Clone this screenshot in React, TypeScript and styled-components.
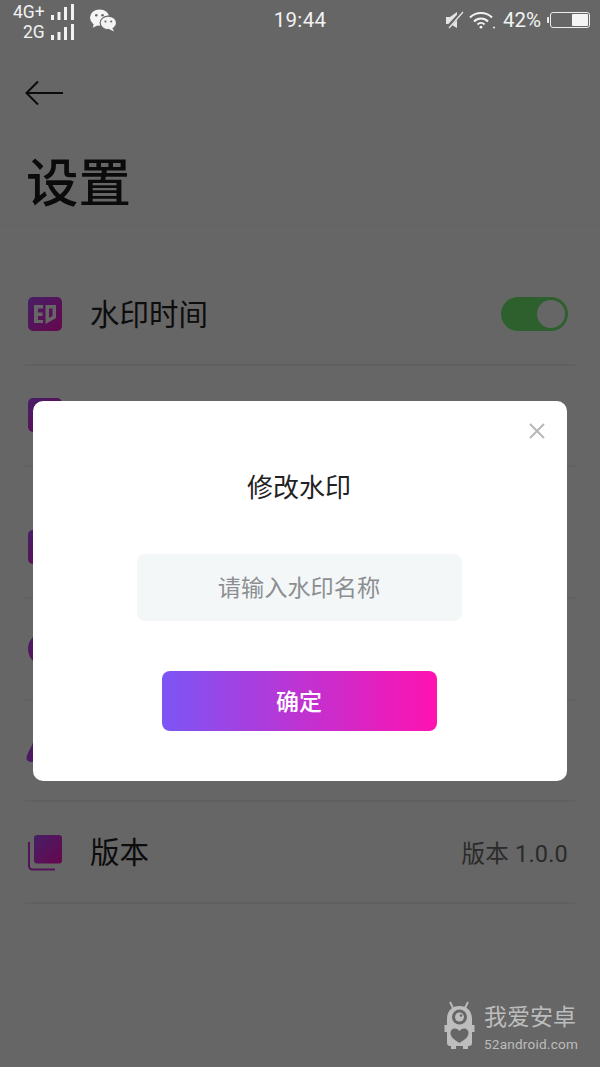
import styled, { createGlobalStyle } from "styled-components";

const GlobalStyle = createGlobalStyle`
  html, body {
    margin: 0;
    padding: 0;
    background: #fff;
    font-family: Roboto, "Noto Sans CJK SC", sans-serif;
  }
  * {
    box-sizing: border-box;
  }
`;

const Page = styled.div`
  position: relative;
  width: 600px;
  height: 1067px;
  overflow: hidden;
  background: #fff;
`;

const StatusBar = styled.div`
  position: relative;
  z-index: 2;
  height: 50px;
  display: grid;
  grid-template-columns: 1fr auto 1fr;
  align-items: start;
  color: #f2f2f2;
`;

const StatusLeft = styled.div`
  display: flex;
  align-items: flex-start;
  padding: 3px 0 0 13px;
  gap: 16px;
`;

const SimGroup = styled.div`
  display: flex;
  flex-direction: column;
  align-items: flex-end;
  gap: 1px;
`;

const SimRow = styled.div`
  display: flex;
  align-items: center;
  gap: 6px;
  height: 19px;
  font-size: 17.5px;
  line-height: 19px;
`;

const Clock = styled.div`
  font-size: 20.5px;
  line-height: 24px;
  padding-top: 8px;
  letter-spacing: 0.3px;
`;

const StatusRight = styled.div`
  display: flex;
  justify-content: flex-end;
  align-items: center;
  height: 40px;
  gap: 5px;
  padding-right: 10px;
  font-size: 20.5px;
`;

const BatteryPercent = styled.span`
  margin-left: 1px;
`;

const Battery = styled.div`
  position: relative;
  width: 40px;
  height: 16px;
  margin-left: 4px;
  border: 1.5px solid #eee;
  border-radius: 3px;
  display: flex;
  justify-content: flex-end;
  padding: 1px;

  &::before {
    content: "";
    position: absolute;
    left: -4px;
    top: 4px;
    width: 2px;
    height: 6px;
    border-radius: 1px 0 0 1px;
    background: #eee;
  }
`;

const BatteryLevel = styled.div`
  width: 16px;
  background: #f4f4f4;
  border-radius: 1px;
`;

const NavBar = styled.div`
  height: 85px;
  padding: 30px 0 0 25px;
`;

const Title = styled.h1`
  margin: 0;
  height: 91px;
  padding: 22px 0 0 26px;
  font-size: 52.5px;
  line-height: 54px;
  font-weight: 500;
  color: #1c1c1c;
  border-bottom: 1px solid #f8f8f8;
`;

const List = styled.div`
  padding: 38px 25px 0 28px;
  display: flex;
  flex-direction: column;
`;

const Row = styled.div<{ $gapAfter?: boolean }>`
  height: 101.5px;
  display: flex;
  align-items: center;
  border-bottom: 2px solid #f0f0f0;
  margin-left: -3px;
  padding: 0 7px 0 3px;
  margin-bottom: ${(p) => (p.$gapAfter ? "30.5px" : "0")};
`;

const RowLabel = styled.div`
  flex: 1;
  margin-left: 28px;
  padding-top: 3px;
  font-size: 29.5px;
  line-height: 40px;
  color: #222;
  font-weight: 400;
`;

const RowValue = styled.div`
  font-size: 23.5px;
  padding-top: 1px;
  color: #6b6b6b;
  letter-spacing: 0.2px;
`;

const IconSquare = styled.div`
  width: 34px;
  height: 34px;
  border-radius: 5px;
  background: linear-gradient(135deg, #b050ff, #ff10c0);
  color: #fff;
  display: flex;
  align-items: center;
  justify-content: center;
`;

const IconCircle = styled(IconSquare)`
  border-radius: 50%;
`;

const Toggle = styled.div`
  width: 67px;
  height: 34px;
  border-radius: 17px;
  background: #70f070;
  display: flex;
  justify-content: flex-end;
  align-items: center;
  padding-right: 3px;
`;

const Knob = styled.div`
  width: 28px;
  height: 28px;
  border-radius: 50%;
  background: #fff;
`;

const Scrim = styled.div`
  position: absolute;
  inset: 0;
  z-index: 1;
  background: rgba(0, 0, 0, 0.6);
  display: flex;
  justify-content: center;
  align-items: flex-start;
  padding-top: 401px;
`;

const Modal = styled.div`
  position: relative;
  width: 534px;
  height: 380px;
  background: #fff;
  border-radius: 10px;
  display: flex;
  flex-direction: column;
  align-items: center;
`;

const CloseButton = styled.div`
  position: absolute;
  top: 21px;
  right: 21px;
  width: 18px;
  height: 18px;
  display: flex;
`;

const ModalTitle = styled.div`
  margin-top: 69px;
  margin-right: 2px;
  font-size: 26px;
  line-height: 36px;
  color: #222;
`;

const NameInput = styled.div`
  margin-top: 48px;
  margin-right: 2px;
  width: 325px;
  height: 67px;
  padding-bottom: 3px;
  border-radius: 8px;
  background: #f4f7f8;
  color: #8c8f91;
  font-size: 23.2px;
  display: flex;
  align-items: center;
  justify-content: center;
`;

const ConfirmButton = styled.div`
  margin-top: 50px;
  margin-right: 2px;
  width: 275px;
  height: 60px;
  padding-bottom: 3px;
  border-radius: 8px;
  background: linear-gradient(90deg, #7c55f5, #ff12b0);
  color: #fff;
  font-size: 23px;
  font-weight: 500;
  display: flex;
  align-items: center;
  justify-content: center;
`;

const Watermark = styled.div`
  position: absolute;
  z-index: 3;
  left: 444px;
  top: 1001px;
  display: flex;
  gap: 10px;
  color: #bdbdbd;
`;

const WatermarkText = styled.div`
  display: flex;
  flex-direction: column;
  padding-top: 2px;
  margin-left: -1px;
`;

const WatermarkName = styled.div`
  font-size: 23px;
  line-height: 30px;
`;

const WatermarkUrl = styled.div`
  font-size: 13.6px;
  line-height: 16px;
  margin-top: 3px;
  letter-spacing: 0.2px;
`;

const Signal = () => (
  <svg width="23" height="17" viewBox="0 0 23 17" fill="#f2f2f2">
    <rect x="0" y="11" width="3" height="5" />
    <rect x="6.500" y="8" width="3" height="8" />
    <rect x="13" y="3" width="3" height="13" />
    <rect x="20" y="0" width="3" height="16" />
  </svg>
);

const WeChat = () => (
  <svg width="27" height="24" viewBox="0 0 28 24" fill="#f4f4f4" style={{ marginTop: 5 }}>
    <ellipse cx="10" cy="9.500" rx="10" ry="8.500" />
    <path d="M4 15l-1 5 6-3z" />
    <ellipse cx="19" cy="15" rx="8.500" ry="7" stroke="#666" strokeWidth="1.200" />
    <path d="M23 20l2 4-6-3z" />
    <circle cx="6.500" cy="7" r="1.300" fill="#666" />
    <circle cx="13" cy="7" r="1.300" fill="#666" />
    <circle cx="16" cy="13.500" r="1.100" fill="#666" />
    <circle cx="22" cy="13.500" r="1.100" fill="#666" />
  </svg>
);

const MuteIcon = () => (
  <svg width="18" height="18" viewBox="0 0 18 18">
    <path d="M0 6h4l7-5v16l-7-4H0z" fill="#e4e4e4" />
    <path d="M1 17L17 0" stroke="#666" strokeWidth="3.500" />
    <path d="M3 17L17 1" stroke="#e4e4e4" strokeWidth="1.300" />
  </svg>
);

const WifiIcon = () => (
  <svg width="28" height="18" viewBox="0 0 28 18" fill="none" stroke="#f2f2f2" strokeWidth="2">
    <path d="M1 6.500C7 .5 17 .5 23 6.500" />
    <path d="M5 10.500c4-4 10-4 14 0" />
    <path d="M8.500 13.500c2-2 5-2 7 0" />
    <circle cx="12" cy="16.200" r="1.400" fill="#f2f2f2" stroke="none" />
    <circle cx="25" cy="16.500" r="1" fill="#f2f2f2" stroke="none" />
  </svg>
);

const BackArrow = () => (
  <svg width="40" height="26" viewBox="0 0 40 26" fill="none" stroke="#1c1c1c" strokeWidth="2">
    <path d="M38 13H2" />
    <path d="M13 1.500L1.500 13 13 24.500" />
  </svg>
);

const StampGlyph = () => (
  <svg width="24" height="24" viewBox="0 0 24 24" fill="#fff">
    <path d="M1 3h9v3.500H5v4h4.500V14H5v4h5v3H1z" />
    <path fillRule="evenodd" d="M12.500 3H23v13l-10.500 6zM16 6.500v9.500l3.500-2V6.500z" />
  </svg>
);

const VersionIcon = () => (
  <svg width="34" height="36" viewBox="0 0 34 36" style={{ marginTop: 2 }}>
    <defs>
      <linearGradient id="versionGrad" x1="0" y1="0" x2="1" y2="1">
        <stop offset="0" stopColor="#b050ff" />
        <stop offset="1" stopColor="#ff10c0" />
      </linearGradient>
    </defs>
    <path d="M1 7v24a3.500 3.500 0 0 0 3.500 3.500H27" fill="none" stroke="#d030e0" strokeWidth="2" />
    <rect x="6" y="0" width="28" height="28.500" rx="3" fill="url(#versionGrad)" />
  </svg>
);

const DropIcon = () => (
  <svg width="34" height="34" viewBox="0 0 34 34" style={{ marginLeft: -3 }}>
    <path d="M8 9C7 14 2 20 1.500 25 1.500 28 4 29 8 29z" fill="#c040f0" />
  </svg>
);

const Robot = () => (
  <svg width="31" height="49" viewBox="0 0 31 49" fill="#bdbdbd">
    <path d="M6 1l3 6M24 1l-3 6" stroke="#bdbdbd" strokeWidth="1.800" />
    <path d="M3 18C3 10 8 5 15.500 5S28 10 28 18v6h2.500v7H28v11c0 2-1 3-3 3h-1v3h-5v-3h-7v3H7v-3H6c-2 0-3-1-3-3V31H.5v-7H3z" />
    <circle cx="15.500" cy="16" r="7.500" fill="#666" />
    <circle cx="15.500" cy="16" r="4.500" fill="#bdbdbd" />
    <circle cx="17" cy="14.500" r="1.300" fill="#666" />
    <path d="M15.500 42c-5-3-9-6-9-10 0-5 6-6 9-2 3-4 9-3 9 2 0 4-4 7-9 10z" fill="#666" />
  </svg>
);

const App = () => {
  return (
    <Page>
      <GlobalStyle />
      <StatusBar>
        <StatusLeft>
          <SimGroup>
            <SimRow>
              4G+ <Signal />
            </SimRow>
            <SimRow>
              2G <Signal />
            </SimRow>
          </SimGroup>
          <WeChat />
        </StatusLeft>
        <Clock>19:44</Clock>
        <StatusRight>
          <MuteIcon />
          <WifiIcon />
          <BatteryPercent>42%</BatteryPercent>
          <Battery>
            <BatteryLevel />
          </Battery>
        </StatusRight>
      </StatusBar>
      <NavBar>
        <BackArrow />
      </NavBar>
      <Title>设置</Title>
      <List>
        <Row>
          <IconSquare>
            <StampGlyph />
          </IconSquare>
          <RowLabel>水印时间</RowLabel>
          <Toggle>
            <Knob />
          </Toggle>
        </Row>
        <Row $gapAfter>
          <IconSquare />
        </Row>
        <Row>
          <IconSquare />
        </Row>
        <Row>
          <IconCircle />
        </Row>
        <Row>
          <DropIcon />
        </Row>
        <Row>
          <VersionIcon />
          <RowLabel>版本</RowLabel>
          <RowValue>版本 1.0.0</RowValue>
        </Row>
      </List>
      <Scrim>
        <Modal>
          <CloseButton>
            <svg width="18" height="18" viewBox="0 0 18 18" stroke="#b8b8b8" strokeWidth="2">
              <path d="M2 2l14 14M16 2L2 16" />
            </svg>
          </CloseButton>
          <ModalTitle>修改水印</ModalTitle>
          <NameInput>请输入水印名称</NameInput>
          <ConfirmButton>确定</ConfirmButton>
        </Modal>
      </Scrim>
      <Watermark>
        <Robot />
        <WatermarkText>
          <WatermarkName>我爱安卓</WatermarkName>
          <WatermarkUrl>52android.com</WatermarkUrl>
        </WatermarkText>
      </Watermark>
    </Page>
  );
};

export default App;
